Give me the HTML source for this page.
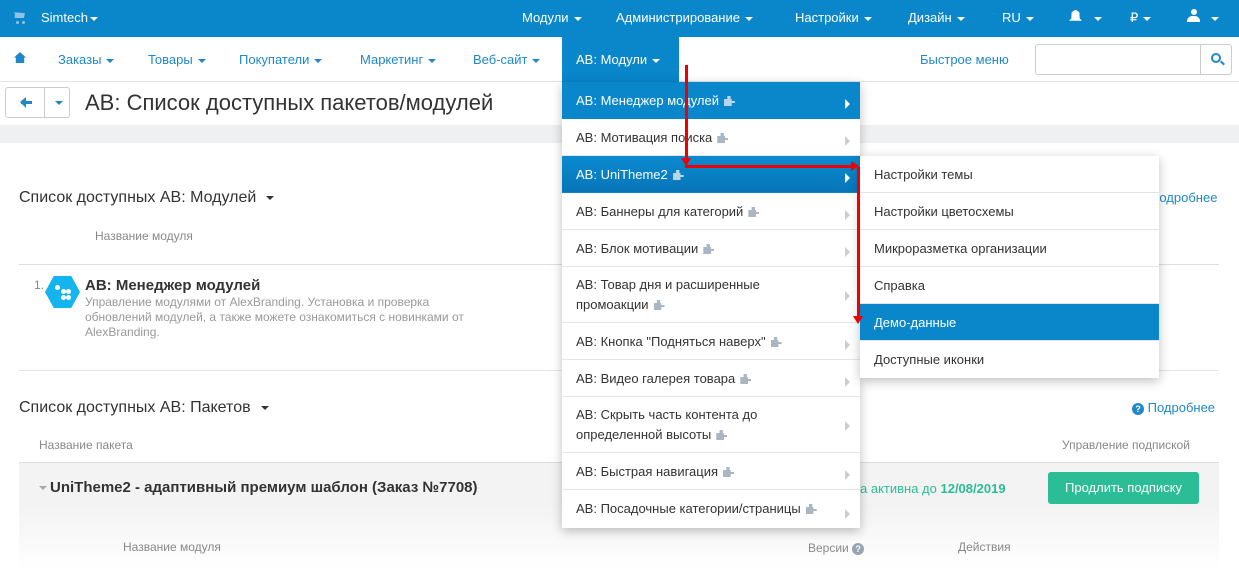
<!DOCTYPE html>
<html><head><meta charset="utf-8"><style>
*{box-sizing:border-box;margin:0;padding:0}
body{width:1239px;height:570px;overflow:hidden;font-family:"Liberation Sans","Noto Sans CJK SC",sans-serif;background:#fff;position:relative;color:#333}
.a{position:absolute;white-space:nowrap}
.top{position:absolute;left:0;top:0;width:1239px;height:37px;background:#0a87cb;color:#fff;font-size:13px}
.car{display:inline-block;width:0;height:0;border-left:4px solid transparent;border-right:4px solid transparent;border-top:4px solid currentColor;vertical-align:middle;margin-left:5px}
.nav{position:absolute;left:0;top:37px;width:1239px;height:45px;border-bottom:1px solid #e6e9ec;color:#1e88c8;font-size:13px}
.dd{position:absolute;left:562px;top:82px;width:298px;height:446px;background:#fff;box-shadow:0 3px 10px rgba(0,0,0,.25);font-size:13px;color:#333}
.it{position:absolute;left:0;width:298px;border-bottom:1px solid #e5e5e5;padding-left:14px;line-height:20px}
.it.on{background:#0a86cb;color:#fff;border-bottom-color:#0a86cb}
.pz{display:inline-block;width:11px;height:10px;background:#aab6c2;margin-left:5px;vertical-align:-1px;clip-path:polygon(0 30%,30% 30%,30% 0,60% 0,60% 30%,70% 30%,70% 50%,100% 50%,100% 70%,70% 70%,70% 100%,0 100%)}
.on .pz{background:#b8d6ea}
.ar{position:absolute;right:10px;width:0;height:0;border-top:5px solid transparent;border-bottom:5px solid transparent;border-left:5px solid #ccc}
.on .ar{border-left-color:#fff}
.sub{position:absolute;left:860px;top:156px;width:299px;height:222px;background:#fff;box-shadow:0 3px 10px rgba(0,0,0,.25);font-size:13px}
.si{position:absolute;left:0;width:299px;height:37px;line-height:37px;padding-left:14px;border-bottom:1px solid #e5e5e5}
.si.on{background:#0a86cb;color:#fff}
.h{font-size:16px;color:#333}
.g{font-size:12px;color:#888}
.blue{color:#1e88c8;font-size:13px}
.rl{position:absolute;background:#e00}
.dot{position:absolute;width:5px;height:5px;border-radius:3px;background:#fff}
</style></head><body>
<div class="top">
 <div class="a" style="left:13px;top:12px;width:12px;height:8px;background:#8ec3e6;clip-path:polygon(0 0,100% 15%,90% 75%,15% 75%,15% 0)"></div>
 <div class="a" style="left:16px;top:21px;width:3px;height:3px;border-radius:2px;background:#8ec3e6"></div>
 <div class="a" style="left:22px;top:21px;width:3px;height:3px;border-radius:2px;background:#8ec3e6"></div>
 <div class="a" style="left:41px;top:10px">Simtech<span class="car" style="margin-left:2px"></span></div>
 <div class="a" style="left:522px;top:10px">Модули<span class="car"></span></div>
 <div class="a" style="left:616px;top:10px">Администрирование<span class="car"></span></div>
 <div class="a" style="left:795px;top:10px">Настройки<span class="car"></span></div>
 <div class="a" style="left:908px;top:10px">Дизайн<span class="car"></span></div>
 <div class="a" style="left:1002px;top:10px">RU<span class="car"></span></div>
 <div class="a" style="left:1069px;top:10px;width:13px;height:12px;background:#fff;clip-path:polygon(45% 0,55% 0,80% 20%,82% 70%,100% 90%,0 90%,18% 70%,20% 20%)"></div><span class="car a" style="left:1089px;top:17px"></span>
 <div class="a" style="left:1130px;top:10px">₽<span class="car"></span></div>
 <div class="a" style="left:1187px;top:9px;width:13px;height:14px"><div style="width:6px;height:6px;border-radius:3px;background:#fff;margin:0 auto"></div><div style="width:13px;height:6px;border-radius:5px 5px 0 0;background:#fff;margin-top:1px"></div></div><span class="car a" style="left:1206px;top:17px"></span>
</div>
<div class="nav">
 <div class="a" style="left:14px;top:15px;width:12px;height:11px;background:#1e88c8;clip-path:polygon(50% 0,100% 50%,85% 50%,85% 100%,15% 100%,15% 50%,0 50%)"></div>
 <div class="a" style="left:58px;top:15px">Заказы<span class="car"></span></div>
 <div class="a" style="left:148px;top:15px">Товары<span class="car"></span></div>
 <div class="a" style="left:239px;top:15px">Покупатели<span class="car"></span></div>
 <div class="a" style="left:360px;top:15px">Маркетинг<span class="car"></span></div>
 <div class="a" style="left:473px;top:15px">Веб-сайт<span class="car"></span></div>
 <div class="a" style="left:562px;top:0;width:117px;height:45px;background:#0a86cb;color:#fff;padding:15px 0 0 14px">АВ: Модули<span class="car"></span></div>
 <div class="a" style="left:920px;top:15px">Быстрое меню</div>
 <div class="a" style="left:1035px;top:7px;width:197px;height:31px;border:1px solid #ccc;border-radius:3px"><div style="position:absolute;left:164px;top:0;width:1px;height:29px;background:#ccc"></div><div style="position:absolute;left:175px;top:8px;width:10px;height:10px;border:2px solid #1e88c8;border-radius:50%"></div><div style="position:absolute;left:184px;top:17px;width:5px;height:2px;background:#1e88c8;transform:rotate(45deg)"></div></div>
</div>
<div class="a" style="left:0;top:82px;width:1239px;height:43px;background:#fff;box-shadow:0 1px 3px rgba(0,0,0,.12)"></div>
<div class="a" style="left:0;top:125px;width:1239px;height:18px;background:#eef0f2"></div>
<div class="a" style="left:5px;top:87px;width:65px;height:31px;border:1px solid #ccc;border-radius:3px">
 <div style="position:absolute;left:38px;top:0;width:1px;height:29px;background:#ccc"></div>
 <div style="position:absolute;left:15px;top:13px;width:11px;height:3px;background:#1e88c8"></div>
 <div style="position:absolute;left:14px;top:9px;width:0;height:0;border-top:5px solid transparent;border-bottom:6px solid transparent;border-right:6px solid #1e88c8"></div>
 <span class="car" style="position:absolute;left:44px;top:13px;color:#1e88c8"></span></div>
<div class="a" style="left:85px;top:90px;font-size:22px;color:#333">АВ: Список доступных пакетов/модулей</div>

<div class="a h" style="left:19px;top:189px">Список доступных АВ: Модулей<span class="car" style="margin-left:10px;color:#333"></span></div>
<div class="a blue" style="left:1150px;top:190px">Подробнее</div>
<div class="a g" style="left:95px;top:229px">Название модуля</div>
<div class="a" style="left:19px;top:264px;width:1200px;height:1px;background:#ddd"></div>
<div class="a g" style="left:34px;top:278px">1.</div>
<div class="a" style="left:45px;top:276px;width:35px;height:32px;background:#14b4ef;clip-path:polygon(25% 0,75% 0,100% 50%,75% 100%,25% 100%,0 50%)">
 <div class="dot" style="left:10px;top:9px"></div><div class="dot" style="left:16px;top:13px"></div><div class="dot" style="left:21px;top:13px"></div><div class="dot" style="left:16px;top:19px"></div><div class="dot" style="left:21px;top:19px"></div></div>
<div class="a" style="left:85px;top:277px;font-size:15px;font-weight:bold;color:#333">АВ: Менеджер модулей</div>
<div class="a" style="left:85px;top:295px;font-size:12px;color:#999;line-height:15px">Управление модулями от AlexBranding. Установка и проверка<br>обновлений модулей, а также можете ознакомиться с новинками от<br>AlexBranding.</div>
<div class="a" style="left:19px;top:370px;width:1200px;height:1px;background:#e5e5e5"></div>
<div class="a h" style="left:19px;top:399px">Список доступных АВ: Пакетов<span class="car" style="margin-left:10px;color:#333"></span></div>
<div class="a blue" style="left:1132px;top:400px"><span style="display:inline-block;width:12px;height:12px;border-radius:6px;background:#1e88c8;color:#fff;font-size:9px;text-align:center;line-height:12px;font-weight:bold;vertical-align:0">?</span> Подробнее</div>
<div class="a g" style="left:39px;top:438px">Название пакета</div>
<div class="a g" style="left:1062px;top:438px">Управление подпиской</div>
<div class="a" style="left:19px;top:462px;width:1200px;height:108px;background:linear-gradient(#f3f3f3 40%,#fff);border-top:1px solid #ddd"></div>
<div class="a" style="left:39px;top:479px;font-size:15px;font-weight:bold;color:#333"><span class="car" style="margin:0 3px 0 0;color:#aaa"></span>UniTheme2 - адаптивный премиум шаблон (Заказ №7708)</div>
<div class="a" style="left:860px;top:481px;font-size:13px;color:#2bbd95">а активна до <b>12/08/2019</b></div>
<div class="a" style="left:1048px;top:472px;width:151px;height:32px;background:#2bbd95;border-radius:3px;color:#fff;font-size:13px;text-align:center;line-height:32px">Продлить подписку</div>
<div class="a g" style="left:123px;top:540px">Название модуля</div>
<div class="a g" style="left:808px;top:541px">Версии <span style="display:inline-block;width:12px;height:12px;border-radius:6px;background:#97a5b2;color:#fff;font-size:9px;text-align:center;line-height:12px;font-weight:bold">?</span></div>
<div class="a g" style="left:958px;top:540px">Действия</div>

<div class="dd">
 <div class="it on" style="top:0;height:37px;padding-top:9px">АВ: Менеджер модулей<span class="pz"></span><span class="ar" style="top:17px"></span></div>
 <div class="it" style="top:37px;height:37px;padding-top:9px">АВ: Мотивация поиска<span class="pz"></span><span class="ar" style="top:17px"></span></div>
 <div class="it on" style="top:74px;height:37px;padding-top:9px;background:linear-gradient(#0a8ad0,#0776b8)">АВ: UniTheme2<span class="pz"></span><span class="ar" style="top:17px"></span></div>
 <div class="it" style="top:111px;height:37px;padding-top:9px">АВ: Баннеры для категорий<span class="pz"></span><span class="ar" style="top:17px"></span></div>
 <div class="it" style="top:148px;height:37px;padding-top:9px">АВ: Блок мотивации<span class="pz"></span><span class="ar" style="top:17px"></span></div>
 <div class="it" style="top:185px;height:56px;padding-top:8px">АВ: Товар дня и расширенные<br>промоакции<span class="pz"></span><span class="ar" style="top:24px"></span></div>
 <div class="it" style="top:241px;height:37px;padding-top:9px">АВ: Кнопка "Подняться наверх"<span class="pz"></span><span class="ar" style="top:17px"></span></div>
 <div class="it" style="top:278px;height:37px;padding-top:9px">АВ: Видео галерея товара<span class="pz"></span><span class="ar" style="top:17px"></span></div>
 <div class="it" style="top:315px;height:56px;padding-top:8px">АВ: Скрыть часть контента до<br>определенной высоты<span class="pz"></span><span class="ar" style="top:24px"></span></div>
 <div class="it" style="top:371px;height:37px;padding-top:9px">АВ: Быстрая навигация<span class="pz"></span><span class="ar" style="top:17px"></span></div>
 <div class="it" style="top:408px;height:38px;padding-top:9px;border:0">АВ: Посадочные категории/страницы<span class="pz"></span><span class="ar" style="top:19px"></span></div>
</div>
<div class="sub">
 <div class="si" style="top:0">Настройки темы</div>
 <div class="si" style="top:37px">Настройки цветосхемы</div>
 <div class="si" style="top:74px">Микроразметка организации</div>
 <div class="si" style="top:111px">Справка</div>
 <div class="si on" style="top:148px">Демо-данные</div>
 <div class="si" style="top:185px;border:0">Доступные иконки</div>
</div>
<div class="rl" style="left:685px;top:65px;width:3px;height:98px"></div>
<div class="a" style="left:681px;top:158px;border-left:5px solid transparent;border-right:5px solid transparent;border-top:8px solid #e00"></div>
<div class="rl" style="left:685px;top:165px;width:168px;height:3px"></div>
<div class="a" style="left:851px;top:161px;border-top:5px solid transparent;border-bottom:5px solid transparent;border-left:8px solid #e00"></div>
<div class="rl" style="left:857px;top:167px;width:3px;height:150px"></div>
<div class="a" style="left:853px;top:316px;border-left:5px solid transparent;border-right:5px solid transparent;border-top:8px solid #e00"></div>
</body></html>
